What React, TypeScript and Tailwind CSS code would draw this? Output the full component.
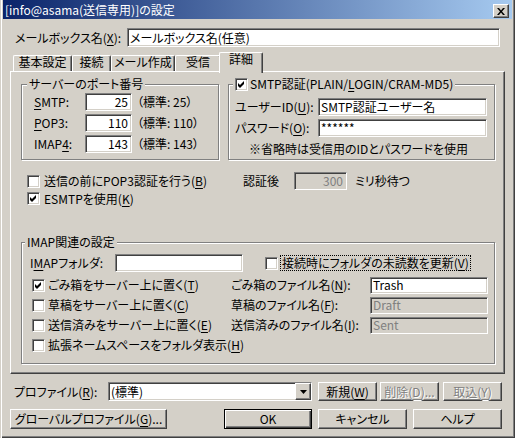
import React from "react";

const SUNKEN =
  "border border-t-[#808080] border-l-[#808080] border-b-white border-r-white shadow-[inset_1px_1px_0_#404040,inset_-1px_-1px_0_#d4d0c8]";
const RAISED =
  "border border-t-white border-l-white border-b-[#404040] border-r-[#404040] shadow-[inset_-1px_-1px_0_#808080]";
const DIS = "text-[#808080] [text-shadow:1px_1px_0_#ffffff]";

function U({ children }: { children: React.ReactNode }) {
  return <span className="underline underline-offset-[2px] decoration-1">{children}</span>;
}

function Check({ checked }: { checked?: boolean }) {
  return (
    <span className={`w-[13px] h-[13px] shrink-0 bg-white ${SUNKEN} flex items-center justify-center`}>
      {checked && (
        <svg width="7" height="7" viewBox="0 0 7 7" className="block">
          <path d="M0 2 L2 4 L6 0 L6 3 L2 7 L0 5 Z" fill="#000" />
        </svg>
      )}
    </span>
  );
}

function Group({
  legend,
  className,
  legendClass,
  children,
}: {
  legend: React.ReactNode;
  className: string;
  legendClass: string;
  children: React.ReactNode;
}) {
  return (
    <div className={`relative border border-[#808080] shadow-[inset_1px_1px_0_#fff,1px_1px_0_#fff] ${className}`}>
      <div className={`absolute -top-[8px] px-[2px] bg-[#d4d0c8] leading-[14px] flex items-center ${legendClass}`}>
        {legend}
      </div>
      {children}
    </div>
  );
}

function Btn({
  className,
  children,
  def,
}: {
  className: string;
  children: React.ReactNode;
  def?: boolean;
}) {
  const b = def
    ? "border border-black shadow-[inset_1px_1px_0_#fff,inset_-1px_-1px_0_#404040,inset_-2px_-2px_0_#808080]"
    : RAISED;
  return <div className={`${b} bg-[#d4d0c8] flex items-center justify-center leading-[14px] ${className}`}>{children}</div>;
}

export default function App() {
  return (
    <div className="w-[515px] h-[438px] bg-[#d4d0c8] relative overflow-hidden flex flex-col font-['Noto_Sans_CJK_JP','Noto_Sans_CJK_SC',sans-serif] text-[12px] leading-[14px] text-black [font-feature-settings:'palt'] shadow-[inset_1px_0_0_#d4d0c8,inset_2px_0_0_#fff,inset_-1px_-1px_0_#404040,inset_-2px_-2px_0_#808080]">
      {/* Title bar */}
      <div className="ml-[3px] w-[509px] h-[19px] shrink-0 bg-[linear-gradient(to_right,#0a246a,#a6caf0)] flex items-center justify-between pl-[2px] pr-[3px]">
        <span className="text-white">[info@asama(送信専用)]の設定</span>
        <div className={`w-[16px] h-[14px] mt-[3px] bg-[#d4d0c8] ${RAISED} flex items-center justify-center`}>
          <svg width="8" height="7" viewBox="0 0 8 7" className="block">
            <path d="M0 0h2l2 2.5L6 0h2L5 3.5 8 7H6L4 4.5 2 7H0l3-3.5z" fill="#000" />
          </svg>
        </div>
      </div>

      {/* Mailbox name */}
      <div className="mt-[9px] flex items-center h-[19px] shrink-0">
        <span className="ml-[15px] w-[112px]">
          メールボックス名(<U>X</U>):
        </span>
        <div className={`${SUNKEN} w-[373px] h-[19px] bg-white pl-[2px] flex items-center`}>メールボックス名(任意)</div>
      </div>

      {/* Tabs */}
      <div className="mt-[5px] h-[19px] shrink-0 flex items-end pl-[13px]">
        {[
          ["基本設定", "w-[59px]"],
          ["接続", "w-[39px]"],
          ["メール作成", "w-[64px]"],
          ["受信", "w-[46px]"],
        ].map(([t, w]) => (
          <div
            key={t}
            className={`${w} h-[16px] border-t border-l border-r border-t-white border-l-white border-r-[#404040] shadow-[inset_-1px_0_0_#808080] rounded-t-[2px] flex justify-center leading-[12px]`}
          >
            {t}
          </div>
        ))}
        <div className="relative z-10 -ml-[2px] w-[44px] h-[21px] -mb-[2px] bg-[#d4d0c8] border-t border-l border-r border-t-white border-l-white border-r-[#404040] shadow-[inset_-1px_0_0_#808080] rounded-t-[2px] flex justify-center leading-[12px]">
          詳細
        </div>
      </div>

      {/* Panel */}
      <div className={`ml-[10px] w-[495px] h-[303px] shrink-0 ${RAISED} flex flex-col`}>
        <div className="mt-[12px] ml-[10px] flex gap-[9px]">
          <Group legend="サーバーのポート番号" className="w-[198px] h-[76px]" legendClass="left-[5px]">
            <div className="pt-[8px] flex flex-col gap-[3px]">
              {[
                [<><U>S</U>MTP:</>, "25", "（標準: 25）"],
                [<><U>P</U>OP3:</>, "110", "（標準: 110）"],
                [<>IMAP<U>4</U>:</>, "143", "（標準: 143）"],
              ].map(([l, v, s], i) => (
                <div key={i} className="flex items-center h-[18px]">
                  <span className="ml-[12px] w-[51px]">{l}</span>
                  <div className={`${SUNKEN} w-[47px] h-[18px] bg-white pr-[3px] flex items-center justify-end`}>{v}</div>
                  <span className="ml-[5px]">{s}</span>
                </div>
              ))}
            </div>
          </Group>
          <Group
            legend={
              <>
                <Check checked />
                <span className="ml-[2px]">
                  SMTP認証(PLAIN/<U>L</U>OGIN/CRAM-MD5)
                </span>
              </>
            }
            className="w-[267px] h-[76px]"
            legendClass="left-[4px]"
          >
            <div className="pt-[13px] flex flex-col gap-[3px]">
              <div className="flex items-center h-[18px]">
                <span className="ml-[6px] w-[83px]">
                  ユーザーID(<U>U</U>):
                </span>
                <div className={`${SUNKEN} w-[169px] h-[18px] bg-white pl-[2px] flex items-center`}>SMTP認証ユーザー名</div>
              </div>
              <div className="flex items-center h-[18px]">
                <span className="ml-[6px] w-[83px]">
                  パスワード(<U>O</U>):
                </span>
                <div className={`${SUNKEN} w-[169px] h-[18px] bg-white pl-[2px] flex items-center`}>******</div>
              </div>
            </div>
            <div className="mt-[5px] ml-[20px]">※省略時は受信用のIDとパスワードを使用</div>
          </Group>
        </div>

        {/* checkbox rows */}
        <div className="mt-[12px] ml-[16px] flex items-center h-[18px]">
          <div className="w-[216px] flex items-center">
            <Check />
            <span className="ml-[4px]">
              送信の前にPOP3認証を行う(<U>B</U>)
            </span>
          </div>
          <span className="w-[51px]">認証後</span>
          <div className={`${SUNKEN} w-[53px] h-[18px] bg-[#d4d0c8] pr-[3px] flex items-center justify-end text-[#808080]`}>300</div>
          <span className="ml-[8px]">ミリ秒待つ</span>
        </div>
        <div className="ml-[16px] flex items-center h-[17px]">
          <Check checked />
          <span className="ml-[4px]">
            ESMTPを使用(<U>K</U>)
          </span>
        </div>

        {/* IMAP group */}
        <div className="mt-[35px] ml-[10px]">
          <Group legend="IMAP関連の設定" className="w-[474px] h-[122px]" legendClass="left-[3px]">
            <div className="pt-[11px]">
              <div className="flex items-center h-[18px]">
                <span className="ml-[8px] w-[85px]">
                  I<U>M</U>APフォルダ:
                </span>
                <div className={`${SUNKEN} w-[128px] h-[18px] bg-white`} />
                <span className="ml-[22px]">
                  <Check />
                </span>
                <span className="ml-[2px] border border-dotted border-black px-[1px] leading-[14px]">
                  接続時にフォルダの未読数を更新(<U>V</U>)
                </span>
              </div>
              <div className="mt-[3px] flex flex-col">
                {[
                  [true, <>ごみ箱をサーバー上に置く(<U>T</U>)</>, <>ごみ箱のファイル名(<U>N</U>):</>, "Trash", false],
                  [false, <>草稿をサーバー上に置く(<U>C</U>)</>, <>草稿のファイル名(<U>F</U>):</>, "Draft", true],
                  [false, <>送信済みをサーバー上に置く(<U>E</U>)</>, <>送信済みのファイル名(<U>I</U>):</>, "Sent", true],
                ].map(([c, t, l, v, d], i) => (
                  <div key={i} className="flex items-center h-[20px]">
                    <div className="ml-[10px] w-[199px] flex items-center">
                      <Check checked={c as boolean} />
                      <span className="ml-[3px]">{t as React.ReactNode}</span>
                    </div>
                    <span className="w-[139px]">{l as React.ReactNode}</span>
                    <div
                      className={`${SUNKEN} w-[118px] h-[17px] pl-[2px] flex items-center ${
                        d ? "bg-[#d4d0c8] text-[#808080]" : "bg-white"
                      }`}
                    >
                      {v as string}
                    </div>
                  </div>
                ))}
                <div className="flex items-center h-[20px]">
                  <div className="ml-[10px] flex items-center">
                    <Check />
                    <span className="ml-[3px]">
                      拡張ネームスペースをフォルダ表示(<U>H</U>)
                    </span>
                  </div>
                </div>
              </div>
            </div>
          </Group>
        </div>
      </div>

      {/* Profile row */}
      <div className="mt-[8px] flex items-center h-[19px] shrink-0">
        <span className="ml-[14px] w-[94px]">
          プロファイル(<U>R</U>):
        </span>
        <div className={`${SUNKEN} w-[204px] h-[19px] bg-white flex items-stretch`}>
          <span className="flex-1 pl-[2px] flex items-center">(標準)</span>
          <div className={`w-[16px] bg-[#d4d0c8] ${RAISED} flex items-center justify-center`}>
            <svg width="7" height="4" viewBox="0 0 7 4" className="block">
              <polygon points="0,0 7,0 3.5,4" fill="#000" />
            </svg>
          </div>
        </div>
        <Btn className="ml-[6px] w-[59px] h-[19px]">
          新規(<U>W</U>)
        </Btn>
        <Btn className={`ml-[3px] w-[59px] h-[19px] ${DIS}`}>
          削除(<U>D</U>)...
        </Btn>
        <Btn className={`ml-[4px] w-[59px] h-[19px] ${DIS}`}>
          取込(<U>Y</U>)
        </Btn>
      </div>

      {/* Bottom buttons */}
      <div className="mt-[8px] flex items-center h-[20px] shrink-0">
        <Btn className="ml-[10px] w-[157px] h-[20px]">
          グローバルプロファイル(<U>G</U>)...
        </Btn>
        <Btn def className="ml-[57px] w-[88px] h-[20px]">
          OK
        </Btn>
        <Btn className="ml-[6px] w-[89px] h-[20px]">キャンセル</Btn>
        <Btn className="ml-[6px] w-[89px] h-[20px]">ヘルプ</Btn>
      </div>
    </div>
  );
}
